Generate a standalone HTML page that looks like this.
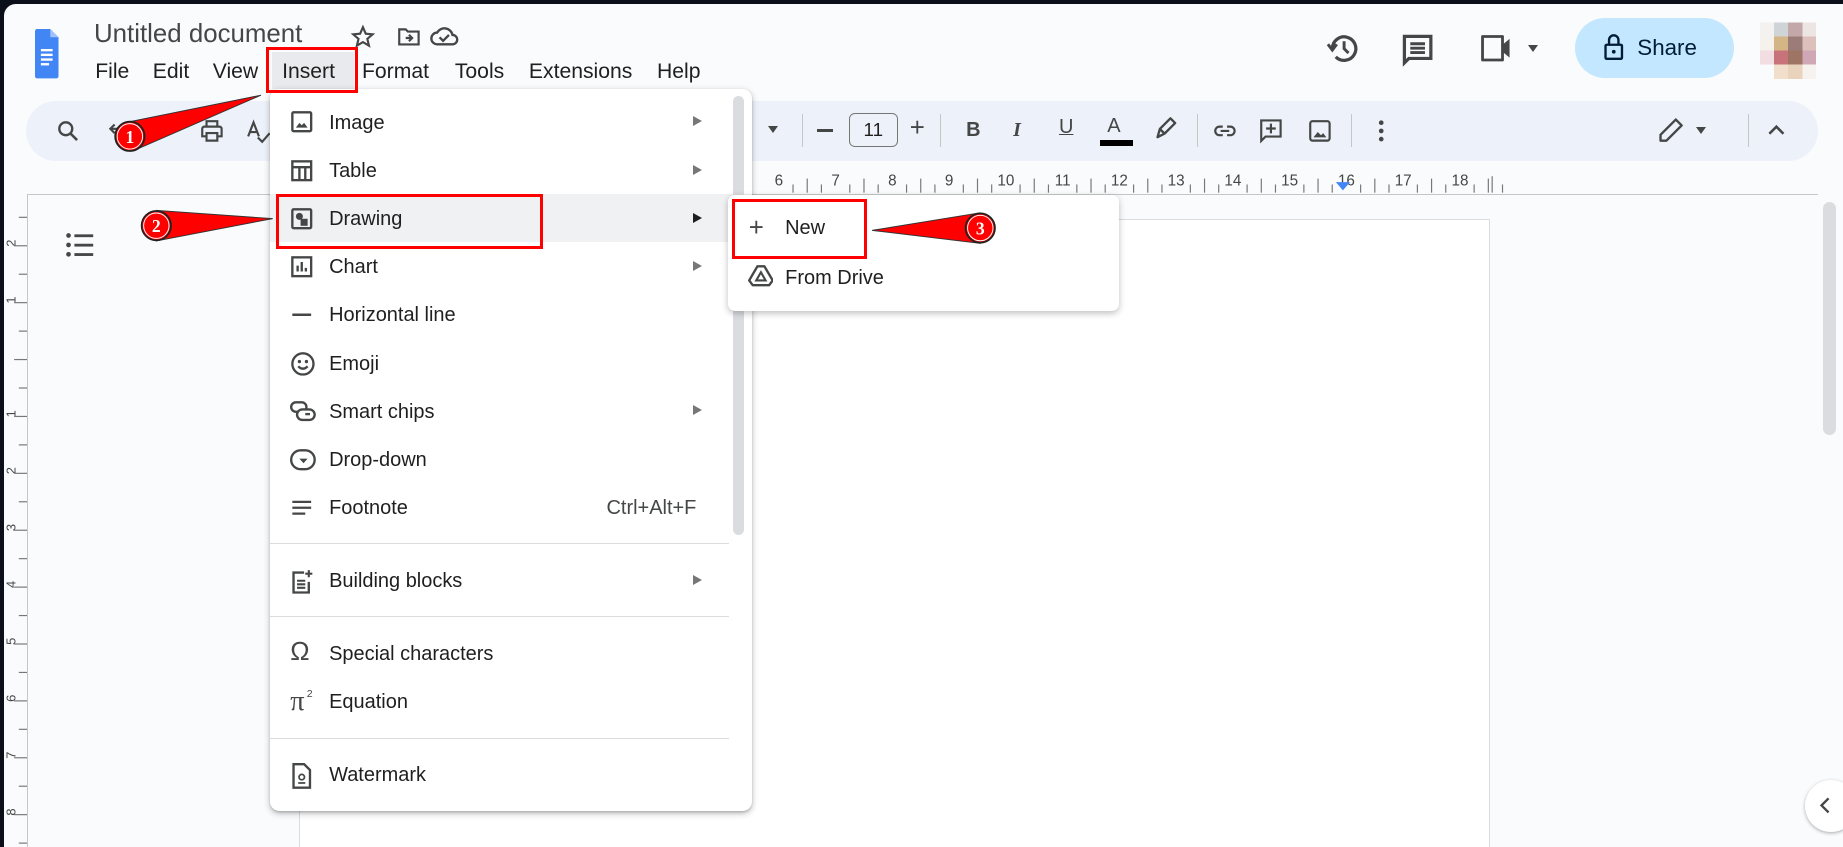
<!DOCTYPE html>
<html><head><meta charset="utf-8"><style>
html,body{margin:0;padding:0;background:#0b0f1a;overflow:hidden}
#w{zoom:1.17538;width:1568px;height:721px;position:relative;overflow:hidden;font-family:"Liberation Sans",sans-serif;color:#1f1f1f}
#app{position:absolute;left:3px;top:3px;right:0;bottom:0;background:#f9fbfd;border-top-left-radius:10px;overflow:hidden}
.a{position:absolute}
.t{position:absolute;white-space:nowrap}
.menu{position:absolute;left:230px;top:76px;width:410px;height:614px;background:#fff;border-radius:8px;box-shadow:0 2px 6px rgba(0,0,0,.25),0 1px 2px rgba(0,0,0,.15)}
.mi{position:absolute;left:0;width:410px;height:41px;font-size:17px;color:#1f1f1f}
.mi span{position:absolute;left:50px;top:12px}
.mi svg{position:absolute;left:17px;top:11px}
.mi .ar{position:absolute;left:360px;top:16px;width:0;height:0;border-left:8px solid #777;border-top:5px solid transparent;border-bottom:5px solid transparent}
.sep{position:absolute;left:0;width:390px;height:1px;background:#dadce0}
.menubar span{position:absolute;top:51px;font-size:18px;color:#1f1f1f}
.tb svg{position:absolute}
</style></head><body><div id="w">
<div id="app"></div>
<svg class="a" style="left:30px;top:25px" width="20" height="42" viewBox="0 0 20 42"><path d="M2 0h11l7 7v33q0 2-2 2H2q-2 0-2-2V2q0-2 2-2z" fill="#4285f4"/><path d="M13 0v7h7z" fill="#a1c2fa"/><rect x="5" y="17" width="10" height="2" fill="#fff"/><rect x="5" y="21" width="10" height="2" fill="#fff"/><rect x="5" y="25" width="10" height="2" fill="#fff"/><rect x="5" y="29" width="7" height="2" fill="#fff"/></svg>
<div class="t" style="left:80px;top:17px;font-size:22px;color:#444746">Untitled document</div>
<svg class="a" style="left:298px;top:20px" width="22" height="22" viewBox="0 0 24 24"><path d="M12 3l2.6 6 6.4.6-4.9 4.2 1.5 6.3L12 16.8 6.4 20.1l1.5-6.3L3 9.6l6.4-.6z" fill="none" stroke="#444746" stroke-width="2"/></svg>
<svg class="a" style="left:337px;top:20px" width="22" height="22" viewBox="0 0 24 24"><path d="M3 5h6l2 2h10v12H3z" fill="none" stroke="#444746" stroke-width="2"/><path d="M9 13h6M12 10l3 3-3 3" fill="none" stroke="#444746" stroke-width="2"/></svg>
<svg class="a" style="left:365px;top:19px" width="26" height="24" viewBox="0 0 26 24"><path d="M7 19a5 5 0 0 1 0-10 7 7 0 0 1 13 2 4 4 0 0 1 0 8z" fill="none" stroke="#444746" stroke-width="2"/><path d="M9 13l3 3 5-5" fill="none" stroke="#444746" stroke-width="2"/></svg>
<div class="a" style="left:231px;top:44px;width:70px;height:32px;background:#e8eaed"></div>
<div class="menubar"><span style="left:81px">File</span><span style="left:130px">Edit</span><span style="left:181px">View</span><span style="left:240px">Insert</span><span style="left:308px">Format</span><span style="left:387px">Tools</span><span style="left:450px">Extensions</span><span style="left:559px">Help</span></div>
<svg class="a" style="left:1127px;top:26px" width="30" height="30" viewBox="0 0 24 24"><path d="M5 12a8 8 0 1 1 2.3 5.6" fill="none" stroke="#444746" stroke-width="2.2"/><path d="M2 9l3 4 3-4" fill="none" stroke="#444746" stroke-width="2"/><path d="M13 7v5l3 3" fill="none" stroke="#444746" stroke-width="2"/></svg>
<svg class="a" style="left:1191px;top:27px" width="30" height="30" viewBox="0 0 24 24"><path d="M3 3h18v15H6l-3 3z" fill="none" stroke="#444746" stroke-width="2.2"/><path d="M7 8h10M7 11h10M7 14h10" stroke="#444746" stroke-width="2"/></svg>
<svg class="a" style="left:1258px;top:28px" width="32" height="26" viewBox="0 0 32 26"><path d="M3 3h17v20H3z" fill="none" stroke="#444746" stroke-width="2.4" stroke-linejoin="round"/><path d="M20 10l6-5v16l-6-5" fill="#444746"/></svg>
<div class="a" style="left:1300px;top:38px;border-top:6px solid #444746;border-left:5px solid transparent;border-right:5px solid transparent"></div>
<div class="a" style="left:1340px;top:15px;width:135px;height:51px;border-radius:26px;background:#c2e7ff"></div>
<svg class="a" style="left:1363px;top:28px" width="20" height="24" viewBox="0 0 20 24"><rect x="3" y="10" width="14" height="12" rx="1" fill="none" stroke="#001d35" stroke-width="2"/><path d="M6 10V6a4 4 0 0 1 8 0v4" fill="none" stroke="#001d35" stroke-width="2"/><circle cx="10" cy="16" r="1.6" fill="#001d35"/></svg>
<div class="t" style="left:1393px;top:30px;font-size:19px;color:#001d35">Share</div>
<svg class="a" style="left:1497px;top:17px" width="48" height="52" viewBox="0 0 4 4" shape-rendering="crispEdges"><rect x="0" y="0" width="1" height="1" fill="#f4f2f0"/><rect x="1" y="0" width="1" height="1" fill="#cfd4d6"/><rect x="2" y="0" width="1" height="1" fill="#c2a8a8"/><rect x="3" y="0" width="1" height="1" fill="#ede5e3"/><rect x="0" y="1" width="1" height="1" fill="#f5f1ec"/><rect x="1" y="1" width="1" height="1" fill="#d4b586"/><rect x="2" y="1" width="1" height="1" fill="#9c7c78"/><rect x="3" y="1" width="1" height="1" fill="#ddbfbb"/><rect x="0" y="2" width="1" height="1" fill="#f2dde2"/><rect x="1" y="2" width="1" height="1" fill="#c8727a"/><rect x="2" y="2" width="1" height="1" fill="#9e7565"/><rect x="3" y="2" width="1" height="1" fill="#d0a7b5"/><rect x="0" y="3" width="1" height="1" fill="#f9fbfd"/><rect x="1" y="3" width="1" height="1" fill="#f1dfcb"/><rect x="2" y="3" width="1" height="1" fill="#e9d3bc"/><rect x="3" y="3" width="1" height="1" fill="#f6f3ef"/></svg>
<div class="a" style="left:22px;top:86px;width:1525px;height:51px;border-radius:26px;background:#edf2fa"></div>
<div class="tb">
<svg style="left:47px;top:100px" width="22" height="22" viewBox="0 0 24 24"><circle cx="10" cy="10" r="6" fill="none" stroke="#444746" stroke-width="2.2"/><path d="M14.5 14.5l6 6" stroke="#444746" stroke-width="2.4"/></svg>
<svg style="left:90px;top:100px" width="22" height="22" viewBox="0 0 24 24"><path d="M4 10h11a5 5 0 0 1 0 10H9M8 6l-4 4 4 4" fill="none" stroke="#444746" stroke-width="2"/></svg>
<svg style="left:169px;top:100px" width="22" height="22" viewBox="0 0 24 24"><path d="M7 8V3h10v5M5 8h14a2 2 0 0 1 2 2v7h-4M7 17H3v-7a2 2 0 0 1 2-2M7 14h10v7H7z" fill="none" stroke="#444746" stroke-width="2"/></svg>
<svg style="left:209px;top:100px" width="22" height="24" viewBox="0 0 24 24"><path d="M2 16L7 3l5 13M4 12h6M11 17l4 4 7-8" fill="none" stroke="#444746" stroke-width="2"/></svg>
<div class="a" style="left:653px;top:107px;border-top:6px solid #444746;border-left:5px solid transparent;border-right:5px solid transparent"></div>
<div class="a" style="left:682px;top:97px;width:1px;height:28px;background:#c4c7c5"></div>
<div class="a" style="left:695px;top:110px;width:14px;height:2px;background:#444746"></div>
<div class="a" style="left:722px;top:96px;width:42px;height:29px;border:1px solid #747775;border-radius:5px;box-sizing:border-box;text-align:center;font-size:16px;line-height:27px;color:#1f1f1f">11</div>
<div class="t" style="left:774px;top:97px;font-size:22px;color:#444746">+</div>
<div class="a" style="left:800px;top:97px;width:1px;height:28px;background:#c4c7c5"></div>
<div class="t" style="left:822px;top:101px;font-size:17px;font-weight:bold;color:#444746">B</div>
<div class="t" style="left:862px;top:101px;font-size:17px;font-weight:bold;font-style:italic;color:#444746;font-family:'Liberation Serif',serif">I</div>
<div class="t" style="left:901px;top:99px;font-size:17px;text-decoration:underline;color:#444746">U</div>
<div class="t" style="left:942px;top:98px;font-size:17px;color:#444746">A</div>
<div class="a" style="left:936px;top:119px;width:28px;height:5px;background:#000"></div>
<svg style="left:982px;top:99px" width="20" height="22" viewBox="0 0 20 22"><path d="M14 2l4 4-9 9-4-4zM5 11l-2 7 6-3" fill="none" stroke="#444746" stroke-width="2" stroke-linejoin="round"/></svg>
<div class="a" style="left:1018px;top:97px;width:1px;height:28px;background:#c4c7c5"></div>
<svg style="left:1031px;top:100px" width="22" height="22" viewBox="0 0 24 24"><path d="M10 8H7a4 4 0 0 0 0 8h3M14 8h3a4 4 0 0 1 0 8h-3M8 12h8" fill="none" stroke="#444746" stroke-width="2"/></svg>
<svg style="left:1070px;top:99px" width="22" height="24" viewBox="0 0 24 24"><path d="M3 3h18v15H7l-4 4z" fill="none" stroke="#444746" stroke-width="2"/><path d="M12 6v9M7.5 10.5h9" stroke="#444746" stroke-width="2"/></svg>
<svg style="left:1112px;top:100px" width="22" height="22" viewBox="0 0 24 24"><rect x="3" y="3" width="18" height="18" rx="2" fill="none" stroke="#444746" stroke-width="2"/><path d="M6 18l4-5 3 3 2-2 3 4z" fill="#444746"/></svg>
<div class="a" style="left:1149px;top:97px;width:1px;height:28px;background:#c4c7c5"></div>
<svg style="left:1168px;top:100px" width="14" height="22" viewBox="0 0 14 22"><circle cx="7" cy="4" r="2" fill="#444746"/><circle cx="7" cy="11" r="2" fill="#444746"/><circle cx="7" cy="18" r="2" fill="#444746"/></svg>
<svg style="left:1410px;top:99px" width="24" height="24" viewBox="0 0 24 24"><path d="M16 3l5 5L8 21H3v-5z" fill="none" stroke="#444746" stroke-width="2" stroke-linejoin="round"/></svg>
<div class="a" style="left:1443px;top:108px;border-top:6px solid #444746;border-left:5px solid transparent;border-right:5px solid transparent"></div>
<div class="a" style="left:1487px;top:97px;width:1px;height:28px;background:#c4c7c5"></div>
<svg style="left:1503px;top:104px" width="16" height="12" viewBox="0 0 16 12"><path d="M2 10l6-6 6 6" fill="none" stroke="#444746" stroke-width="2.2"/></svg>
</div>
<div class="a" style="left:23px;top:165px;width:1524px;height:1px;background:#c4c7c5"></div>
<svg class="a" style="left:630px;top:143px" width="650" height="24" viewBox="630 143 650 24" id="rul"></svg>
<div class="a" style="left:23px;top:166px;width:1px;height:560px;background:#c4c7c5"></div>
<svg class="a" style="left:0;top:166px" width="23" height="560" id="vrul"></svg>
<div class="a" style="left:254px;top:186px;width:1014px;height:540px;background:#fff;border:1px solid #dadce0;box-sizing:border-box"></div>
<svg class="a" style="left:55px;top:197px" width="26" height="22" viewBox="0 0 26 22"><circle cx="3" cy="3" r="2" fill="#444746"/><circle cx="3" cy="11" r="2" fill="#444746"/><circle cx="3" cy="19" r="2" fill="#444746"/><rect x="8" y="2" width="16" height="2.4" fill="#444746"/><rect x="8" y="10" width="16" height="2.4" fill="#444746"/><rect x="8" y="18" width="16" height="2.4" fill="#444746"/></svg>
<div class="a" style="left:1551px;top:172px;width:11px;height:198px;border-radius:6px;background:#dadce0"></div>
<div class="a" style="left:1536px;top:664px;width:44px;height:44px;border-radius:22px;background:#fff;box-shadow:0 1px 3px rgba(0,0,0,.3)"></div>
<svg class="a" style="left:1547px;top:677px" width="12" height="16" viewBox="0 0 12 16"><path d="M9 2L3 8l6 6" fill="none" stroke="#444746" stroke-width="2"/></svg>
<div class="menu">
<div class="mi" style="top:7px;"><svg width="20" height="20" viewBox="0 0 20 20"><rect x="2" y="2" width="16" height="16" rx="1" fill="none" stroke="#444746" stroke-width="2"/><path d="M5 15l3-4 2 2 2-2 3 4z" fill="#444746"/></svg><span>Image</span><i class="ar"></i></div>
<div class="mi" style="top:48px;"><svg width="20" height="20" viewBox="0 0 20 20"><rect x="2" y="2" width="16" height="16" fill="none" stroke="#444746" stroke-width="2"/><path d="M2 7h16M8 7v11M13 7v11" stroke="#444746" stroke-width="2"/></svg><span>Table</span><i class="ar"></i></div>
<div class="mi" style="top:89px;background:#f0f1f3"><svg width="20" height="20" viewBox="0 0 20 20"><rect x="2" y="2" width="16" height="16" rx="1" fill="none" stroke="#444746" stroke-width="2"/><circle cx="8" cy="8" r="3" fill="#444746"/><rect x="9" y="10" width="6" height="6" fill="#444746"/></svg><span>Drawing</span><i class="ar" style="border-left-color:#1f1f1f"></i></div>
<div class="mi" style="top:130px;"><svg width="20" height="20" viewBox="0 0 20 20"><rect x="2" y="2" width="16" height="16" fill="none" stroke="#444746" stroke-width="2"/><path d="M6.5 14V9M10 14V6M13.5 14v-3" stroke="#444746" stroke-width="2"/></svg><span>Chart</span><i class="ar"></i></div>
<div class="mi" style="top:171px;"><svg width="20" height="20" viewBox="0 0 20 20"><path d="M2 10h16" stroke="#444746" stroke-width="2.2"/></svg><span>Horizontal line</span></div>
<div class="mi" style="top:212px;"><svg width="22" height="22" viewBox="0 0 22 22"><circle cx="11" cy="11" r="9" fill="none" stroke="#444746" stroke-width="2"/><circle cx="8" cy="9" r="1.4" fill="#444746"/><circle cx="14" cy="9" r="1.4" fill="#444746"/><path d="M7 13q4 4 8 0" fill="none" stroke="#444746" stroke-width="2"/></svg><span>Emoji</span></div>
<div class="mi" style="top:253px;"><svg width="22" height="20" viewBox="0 0 22 20"><rect x="1" y="2" width="13" height="8" rx="4" fill="none" stroke="#444746" stroke-width="2"/><rect x="6" y="8" width="15" height="9" rx="4.5" fill="#fff" stroke="#444746" stroke-width="2"/><path d="M13 12h4" stroke="#444746" stroke-width="2"/></svg><span>Smart chips</span><i class="ar"></i></div>
<div class="mi" style="top:294px;"><svg width="22" height="20" viewBox="0 0 22 20"><rect x="1" y="2" width="20" height="16" rx="8" fill="none" stroke="#444746" stroke-width="2"/><path d="M8 9h7l-3.5 4z" fill="#444746"/></svg><span>Drop-down</span></div>
<div class="mi" style="top:335px;"><svg width="20" height="20" viewBox="0 0 20 20"><path d="M2 5h16M2 10h16M2 15h11" stroke="#444746" stroke-width="2"/></svg><span>Footnote</span><span style="left:286px;color:#444746">Ctrl+Alt+F</span></div>
<div class="sep" style="top:386px"></div>
<div class="mi" style="top:397px;"><svg width="20" height="22" viewBox="0 0 20 22"><path d="M12 3H3v17h13v-9" fill="none" stroke="#444746" stroke-width="2"/><path d="M6 10h7M6 13h7M6 16h7M16 1v6M13 4h6" stroke="#444746" stroke-width="1.8"/></svg><span>Building blocks</span><i class="ar"></i></div>
<div class="sep" style="top:448px"></div>
<div class="mi" style="top:459px;"><span style="left:17px;top:8px;font-size:22px;color:#444746">Ω</span><span>Special characters</span></div>
<div class="mi" style="top:500px;"><span style="left:17px;top:8px;font-size:24px;color:#444746;font-family:'Liberation Serif',serif">π</span><span style="left:31px;top:9px;font-size:9px;color:#444746">2</span><span>Equation</span></div>
<div class="sep" style="top:552px"></div>
<div class="mi" style="top:562px;"><svg width="20" height="22" viewBox="0 0 20 22"><path d="M3 1h9l5 5v15H3z" fill="none" stroke="#444746" stroke-width="2"/><circle cx="10" cy="12" r="2.3" fill="none" stroke="#444746" stroke-width="1.5"/><path d="M7 17h6" stroke="#444746" stroke-width="1.5"/></svg><span>Watermark</span></div>
<div class="a" style="left:394px;top:6px;width:9px;height:373px;border-radius:5px;background:#dadce0"></div>
</div>
<div class="a" style="left:619px;top:166px;width:333px;height:99px;background:#fff;border-radius:6px;box-shadow:0 2px 6px rgba(0,0,0,.25)"></div>
<div class="t" style="left:637px;top:182px;font-size:22px;color:#444746">+</div>
<div class="t" style="left:668px;top:185px;font-size:17px">New</div>
<svg class="a" style="left:636px;top:225px" width="22" height="20" viewBox="0 0 22 20"><path d="M8 2h6l7 12-3 4H4l-3-4z" fill="none" stroke="#444746" stroke-width="2" stroke-linejoin="round"/><path d="M11 7l-4 7h8z" fill="none" stroke="#444746" stroke-width="1.8"/></svg>
<div class="t" style="left:668px;top:227px;font-size:17px">From Drive</div>
<div class="a" style="left:226px;top:40px;width:79px;height:39px;border:3px solid #f00;box-sizing:border-box"></div>
<div class="a" style="left:235px;top:165px;width:227px;height:47px;border:3px solid #f00;box-sizing:border-box"></div>
<div class="a" style="left:623px;top:169px;width:115px;height:51px;border:3px solid #f00;box-sizing:border-box"></div>
<svg class="a" style="left:0;top:0" width="1568" height="721">
<g stroke="#333" stroke-width="0.8">
<path d="M222 81L108 104 114 128z" fill="#f00"/>
<circle cx="110.5" cy="116" r="12.5" fill="#f00" stroke="#222" stroke-width="1.5"/>
<circle cx="110.5" cy="116" r="10.8" fill="none" stroke="#fff" stroke-width="0.8"/>
<path d="M232 186L133 179 133 205z" fill="#f00"/>
<circle cx="133" cy="192" r="12.5" fill="#f00" stroke="#222" stroke-width="1.5"/>
<circle cx="133" cy="192" r="10.8" fill="none" stroke="#fff" stroke-width="0.8"/>
<path d="M742 196L834 181 834 207z" fill="#f00"/>
<circle cx="834" cy="194" r="12.5" fill="#f00" stroke="#222" stroke-width="1.5"/>
<circle cx="834" cy="194" r="10.8" fill="none" stroke="#fff" stroke-width="0.8"/>
</g>
<g fill="#fff" font-family="Liberation Serif,serif" font-weight="bold" font-size="15" text-anchor="middle">
<text x="110.5" y="121.5">1</text><text x="133" y="197.5">2</text><text x="834" y="199.5">3</text></g>
</svg>
<script>
(function(){var s=document.getElementById('rul'),h='';var nums=[6,7,8,9,10,11,12,13,14,15,16,17,18];
for(var i=0;i<nums.length;i++){var x=663+i*48.3;h+='<text x="'+x+'" y="158" font-size="13" fill="#444746" text-anchor="middle" font-family="Liberation Sans,sans-serif">'+nums[i]+'</text>';
for(var k=1;k<4;k++){var tx=x+k*12.07;h+='<line x1="'+tx+'" x2="'+tx+'" y1="'+(k==2?152:157)+'" y2="164" stroke="#777" stroke-width="1"/>';}}
h+='<line x1="1270" x2="1270" y1="150" y2="164" stroke="#777"/>';
h+='<path d="M1137 155h12l-6 7z" fill="#4285f4"/>';s.innerHTML=h;
var v=document.getElementById('vrul'),g='';var lab={0:'2',2:'1',6:'1',8:'2',10:'3',12:'4',14:'5',16:'6',18:'7',20:'8'};
for(var j=0;j<23;j++){var y=19+j*24.2;g+='<line x1="'+(j%2?12:16)+'" x2="23" y1="'+y+'" y2="'+y+'" stroke="#777"/>';
if(lab[j]!==undefined){g+='<text transform="translate(13,'+(y+25)+') rotate(-90)" font-size="11" fill="#444746" font-family="Liberation Sans,sans-serif">'+lab[j]+'</text>';}}
v.innerHTML=g;})();
</script>
</div></body></html>
